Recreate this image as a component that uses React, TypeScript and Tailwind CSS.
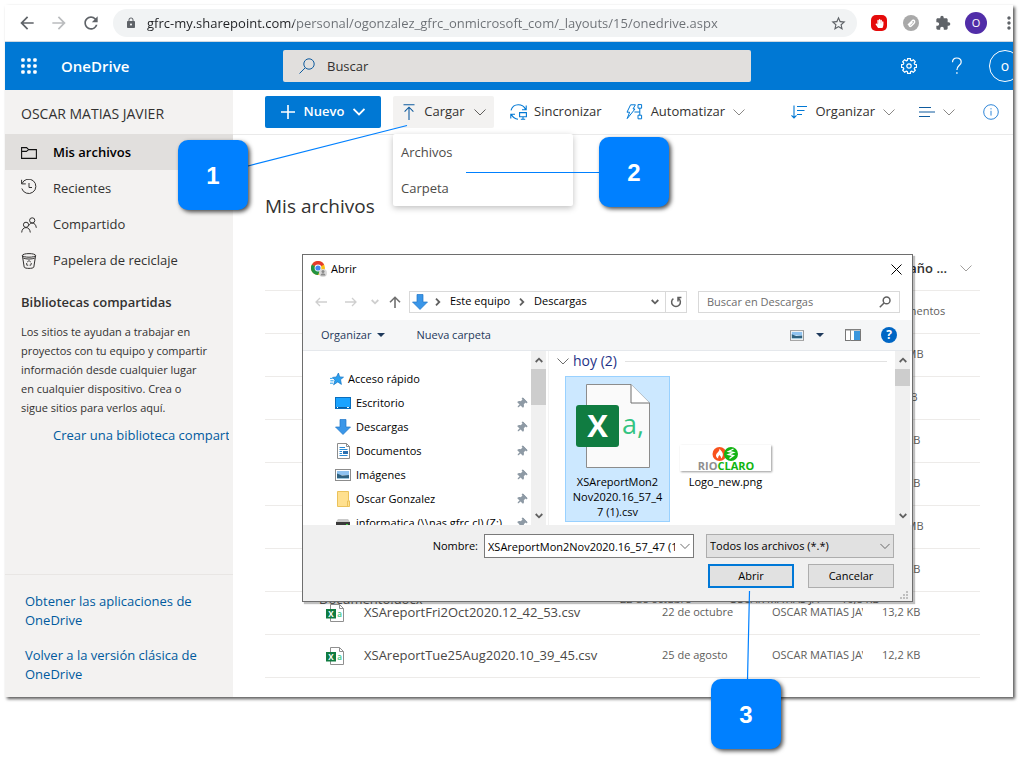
import React from "react";
import {
  MdArrowBack,
  MdArrowForward,
  MdExtension,
  MdLock,
  MdMoreVert,
  MdRefresh,
  MdStarBorder,
} from "react-icons/md";
import { FaHandPaper, FaThumbtack } from "react-icons/fa";

type IconProps = { className?: string };

const Chevron: React.FC<IconProps> = ({ className = "w-3 h-3" }) => (
  <svg viewBox="0 0 12 12" className={`shrink-0 ${className}`} fill="none" stroke="currentColor">
    <path d="M0.5 3.5 L6 9 L11.5 3.5" />
  </svg>
);

// Thick little arrow used by the Windows scroll bars
const ScrollArrow: React.FC<IconProps> = ({ className = "" }) => (
  <svg viewBox="0 0 8 6" className={`w-2 h-1.5 ${className}`} fill="none" stroke="#606060" strokeWidth="1.8">
    <path d="M0.7 1 L4 4.3 L7.3 1" />
  </svg>
);

const gearPoints = Array.from({ length: 8 })
  .flatMap((_, i) =>
    [
      [-16, 5.9],
      [-11, 7.6],
      [11, 7.6],
      [16, 5.9],
    ].map(([offset, radius]) => {
      const angle = ((i * 45 + offset) * Math.PI) / 180;
      return `${8 + radius * Math.cos(angle)},${8 + radius * Math.sin(angle)}`;
    }),
  )
  .join(" ");

const GearIcon = () => (
  <svg viewBox="0 0 16 16" className="w-4 h-4" fill="none" stroke="white" strokeWidth="1.2" strokeLinejoin="round">
    <polygon points={gearPoints} />
    <circle cx="8" cy="8" r="2.2" />
  </svg>
);

const QuestionIcon = () => (
  <svg viewBox="0 0 12 18" className="w-3 h-[18px]" fill="none" stroke="white" strokeWidth="1.2">
    <path d="M1.5 5.2 C1.5 2.6 3.3 1 5.8 1 C8.4 1 10.2 2.5 10.2 4.9 C10.2 8.4 5.9 8.3 5.9 13" />
    <path d="M5.9 15.2 V16.8" strokeWidth="1.4" />
  </svg>
);

const WaffleIcon = () => (
  <svg viewBox="0 0 16 16" className="w-4 h-4" fill="white">
    {[0, 6, 12].map((y) => [0, 6, 12].map((x) => <rect key={`${x}-${y}`} x={x + 0.2} y={y + 0.2} width="3.5" height="3.5" rx="1" />))}
  </svg>
);

const SearchIcon: React.FC<IconProps> = ({ className = "" }) => (
  <svg viewBox="0 0 16 16" className={`w-4 h-4 ${className}`} fill="none" stroke="currentColor">
    <circle cx="10" cy="6" r="5.2" />
    <path d="M6.2 9.8 L0.5 15.5" />
  </svg>
);

const FolderIcon = () => (
  <svg viewBox="0 0 16 16" className="w-4 h-4" fill="none" stroke="#111" strokeWidth="1.1">
    <path d="M0.6 13.4 V2.6 H5.6 L7.6 4.6 H15.4 V13.4 Z M0.6 6.4 H5.4 L7.6 4.6" />
  </svg>
);

const RecentIcon = () => (
  <svg viewBox="0 0 16 16" className="w-4 h-4 -mt-1" fill="none" stroke="#323130">
    <path d="M1 4.6 A7.2 7.2 0 1 1 0.8 9.5 M0.6 0.8 V4.9 H4.8 M8 4 V8.5 H11" />
  </svg>
);

const PeopleIcon = () => (
  <svg viewBox="0 0 16 16" className="w-4 h-4" fill="none" stroke="#323130">
    <circle cx="5" cy="7.8" r="2.6" />
    <circle cx="11.2" cy="3.4" r="2.6" />
    <path d="M0.7 15.5 C0.9 12.2 2.7 10.6 5 10.6 C7.3 10.6 8.9 12.2 9.3 15.5 M7.8 8.6 C8.6 6.9 9.8 6.1 11.2 6.1 C13.5 6.1 15 7.8 15.3 10.8" />
  </svg>
);

const BinIcon = () => (
  <svg viewBox="0 0 16 16" className="w-4 h-4" fill="none" stroke="#323130">
    <ellipse cx="8" cy="2.4" rx="6.6" ry="1.8" />
    <path d="M1.4 2.6 L3.2 14.2 C4 15.8 12 15.8 12.8 14.2 L14.6 2.6 M2.2 5 C5 6.4 11 6.4 13.8 5" />
    <path d="M6.2 9 L8 7.6 L9.8 9 M10.4 10 L9.8 12.2 H8.6 M7.2 12.2 H5.8 L5.6 10" strokeWidth="0.9" />
  </svg>
);

const UploadIcon = () => (
  <svg viewBox="0 0 12 16" className="w-3 h-4" fill="none" stroke="#0f5b9e" strokeWidth="1.1">
    <path d="M0.5 0.7 H11.5 M6 16 V3.4 M1.6 7.6 L6 3.2 L10.4 7.6" />
  </svg>
);

const SyncIcon = () => (
  <svg viewBox="0 0 18 16" className="w-[18px] h-4" fill="none" stroke="#0078d4" strokeWidth="1.1">
    <path d="M1 6.4 C2 2.8 5 0.8 8.2 0.8 C11.6 0.8 14.3 2.6 15.6 5.4 M16.2 1.4 V5.8 H12" />
    <path d="M0.8 14.6 V10.2 H5 M1.4 10.6 C2.8 13.4 5 15 8 15.2" />
    <path d="M9.6 8.6 H16.4 V12.8 H9.6 Z M13 12.8 V15 M10.8 15.2 H15.2" />
  </svg>
);

const AutomateIcon = () => (
  <svg viewBox="0 0 17 16" className="w-[17px] h-4" fill="none" stroke="#0078d4">
    <path d="M4.6 0.8 H9.4 L7 5 H9 L1.2 14.6 L3.6 8.2 H1 Z" />
    <path d="M12 0.6 H15.6 V4.2 H12 Z M12 11.2 H15.6 V14.8 H12 Z M13.8 4.2 V11.2 M8.4 8 H13.8" />
  </svg>
);

const SortIcon = () => (
  <svg viewBox="0 0 16 14" className="w-4 h-3.5" fill="none" stroke="#0078d4" strokeWidth="1.1">
    <path d="M3 0.5 V13 M0.5 10.4 L3 13 L5.5 10.4 M6 1.5 H16 M6 5.5 H13.5 M6 9.5 H11" />
  </svg>
);

const CsvIcon = () => (
  <svg viewBox="0 0 18 18" className="w-[18px] h-[18px]" aria-hidden="true">
    <path d="M4.5 0.5 H13.5 L17.5 4.5 V17.5 H4.5 Z M13.5 0.5 V4.5 H17.5" fill="white" stroke="#8f8f8f" />
    <rect x="0" y="5" width="10" height="9.5" fill="#107c41" />
    <text x="5" y="12.7" fontSize="8" fontWeight="700" fill="white" textAnchor="middle">X</text>
    <text x="13.6" y="12.8" fontSize="8" fontWeight="600" fill="#33c481" textAnchor="middle">a</text>
  </svg>
);

const DownArrowIcon: React.FC<IconProps> = ({ className = "" }) => (
  <svg viewBox="0 0 16 16" className={`w-4 h-4 ${className}`}>
    <path d="M5 0.5 H11 V8 H15.5 L8 15.5 L0.5 8 H5 Z" fill="#3a96e8" stroke="#1f75c7" strokeWidth="0.7" />
  </svg>
);

const StarIcon = () => (
  <svg viewBox="0 0 14 14" className="w-3.5 h-3.5">
    <path d="M8.4 1 L9.7 4.9 L13.5 5.2 L10.5 7.6 L11.4 12.4 L7.8 9.9 L3.6 12.8 L5 8.2 L2.6 5.4 L6.4 5 Z" fill="#2ba0ee" stroke="#1173c4" strokeWidth="0.7" />
    <path d="M0 6.4 H2.8 M0.4 8.8 H3.6 M0 11.2 H3" stroke="#2ba0ee" />
  </svg>
);

const DesktopIcon = () => (
  <svg viewBox="0 0 16 12" className="w-4 h-3">
    <rect x="0.5" y="0.5" width="15" height="11" fill="#1aa3ff" stroke="#0a6ebd" />
    <path d="M1 10.5 H15" stroke="#0a5c9f" />
    <path d="M2 10.5 H3 M12 10.5 H14" stroke="white" />
  </svg>
);

const DocumentIcon = () => (
  <svg viewBox="0 0 13 16" className="w-[13px] h-4">
    <path d="M0.5 0.5 H9.5 L12.5 3.5 V15.5 H0.5 Z M9.5 0.5 V3.5 H12.5" fill="white" stroke="#8c8c8c" />
    <path d="M2.5 4.5 H8 M2.5 6.5 H10.5 M2.5 8.5 H5 M2.5 10.5 H5 M2.5 12.5 H10.5" stroke="#2a8ad4" />
    <rect x="6" y="8" width="5" height="3" fill="#2a6fb0" />
  </svg>
);

const PictureIcon: React.FC<IconProps> = ({ className = "w-4 h-3" }) => (
  <svg viewBox="0 0 16 12" className={className}>
    <rect x="0.5" y="0.5" width="15" height="11" fill="white" stroke="#8c8c8c" />
    <rect x="2" y="2" width="12" height="4" fill="#8fc3f0" />
    <path d="M2 4.5 L7 6.5 L14 6 V9 H2 Z" fill="#2f6280" />
    <path d="M2 9.5 H14" stroke="#9cc6dc" />
  </svg>
);

const YellowFolderIcon = () => (
  <svg viewBox="0 0 13 16" className="w-[13px] h-4">
    <path d="M0.5 0.5 H11.5 V9.5 L12.5 10 V15.5 H0.5 Z" fill="#ffe08f" stroke="#ebc25b" />
    <path d="M10.5 15 V10 H12.5" fill="none" stroke="#ebc25b" />
  </svg>
);

const DriveIcon = () => (
  <svg viewBox="0 0 14 10" className="w-3.5 h-2.5">
    <path d="M2 1 H12 L14 4 H0 Z" fill="#c9c9c9" />
    <rect y="4" width="14" height="5" fill="#3a3a3a" />
    <rect x="10" y="6" width="2" height="1.4" fill="#3bd23b" />
  </svg>
);

const ChromeIcon = () => (
  <svg viewBox="0 0 16 16" className="w-4 h-4">
    <circle cx="7" cy="7" r="7" fill="#fbc116" />
    <path d="M7 7 L0.9 3.5 A7 7 0 0 1 13.1 3.5 Z" fill="#e33b2e" />
    <path d="M7 7 L0.9 3.5 A7 7 0 0 0 7 14 L9 9 Z" fill="#229342" />
    <circle cx="7" cy="7" r="3.4" fill="white" />
    <circle cx="7" cy="7" r="2.6" fill="#4285f4" />
    <circle cx="12" cy="12" r="4" fill="#dadada" />
    <circle cx="12" cy="10.6" r="1.5" fill="#8b8b8b" />
    <path d="M9.6 14.6 C9.6 11.6 14.4 11.6 14.4 14.6 Z" fill="#8b8b8b" />
  </svg>
);

const LargeCsvIcon = () => (
  <svg viewBox="0 0 74 84" className="w-[74px] h-[84px] mr-2.5" aria-hidden="true">
    <path d="M10.5 0.5 H55 L73.5 19 V83.5 H10.5 Z" fill="#fafafa" stroke="#8c8c8c" />
    <path d="M55 0.5 V19 H73.5" fill="white" stroke="#6f6f6f" />
    <rect x="0" y="21" width="43" height="42" rx="3" fill="#107c41" />
    <text x="21.5" y="53" fontSize="31" fontWeight="700" fill="white" textAnchor="middle">X</text>
    <text x="57" y="50" fontSize="27" fill="#33c481" textAnchor="middle">a,</text>
  </svg>
);

const RioClaroLogo = () => (
  <svg viewBox="0 0 91 26" className="w-[91px] h-[26px] bg-white shadow-[1px_1px_2px_#9a9a9a]" aria-hidden="true">
    <circle cx="39.5" cy="9" r="7" fill="#f8521d" />
    <circle cx="51" cy="9" r="7" fill="#12b312" />
    <path d="M39.5 3.5 C41 6 43.5 7.5 42.8 10.6 C42.3 13 41 13.6 41 13.6 C41.4 11.8 40.2 10.8 39.5 10 C38.8 11 37.8 12 38.2 13.6 C35.4 12 35.6 9.6 37 8.2 C38.6 6.6 39.6 5.6 39.5 3.5 Z" fill="white" />
    <path d="M53.5 4 L48.5 6.5 L53.5 7.5 L48.5 9.5 L53.5 10.5 L49.5 13.5" fill="none" stroke="white" strokeWidth="1.3" />
    <text x="46" y="25" fontSize="11" fontWeight="700" textAnchor="middle" fill="#8f8f8f">
      RIO<tspan fill="#0fb50f">CLARO</tspan>
    </text>
  </svg>
);

const BrowserBar = () => (
  <div className="flex items-center h-[37px] pl-3 bg-white border-b border-[#cfd8e0] text-[#5f6368] overflow-hidden">
    <button aria-label="Atrás"><MdArrowBack size={20} /></button>
    <button aria-label="Adelante" className="ml-3 text-[#babcbe]"><MdArrowForward size={20} /></button>
    <button aria-label="Recargar" className="ml-3"><MdRefresh size={20} /></button>
    <div className="flex flex-1 items-center min-w-0 h-7 ml-3 pl-3 pr-2.5 rounded-full bg-[#f1f3f4]">
      <MdLock size={12} className="shrink-0" />
      <input
        aria-label="Dirección"
        className="flex-1 min-w-0 ml-2.5 pt-px text-[13px] outline-none bg-[linear-gradient(90deg,#202124_147px,#6b6f74_147px)] bg-clip-text text-transparent"
        defaultValue="gfrc-my.sharepoint.com/personal/ogonzalez_gfrc_onmicrosoft_com/_layouts/15/onedrive.aspx"
      />
      <button aria-label="Favoritos"><MdStarBorder size={17} /></button>
    </div>
    <div className="flex items-center shrink-0 ml-3.5">
      <span className="flex items-center justify-center w-4 h-4 rounded-[5px] bg-[#e50b0b] text-white"><FaHandPaper size={9} /></span>
      <span className="flex items-center justify-center w-4 h-4 ml-4 rounded-full bg-[#a9a9a9]">
        <svg viewBox="0 0 10 10" className="w-2.5 h-2.5" fill="none" stroke="white" strokeWidth="1.5">
          <path d="M2 7 L6.5 2.5 C8.5 1.5 9.3 4 8 5.2 L5 8.2 C3.8 9 2.8 7.6 3.6 6.6 L6.4 4" />
        </svg>
      </span>
      <MdExtension size={16} className="ml-4" />
      <span className="flex items-center justify-center w-[22px] h-[22px] ml-3.5 rounded-full bg-[#512da8] text-white text-[11px]">O</span>
      <button aria-label="Menú" className="ml-3 -mr-1.5"><MdMoreVert size={20} /></button>
    </div>
  </div>
);

const SuiteBar = () => (
  <header className="flex items-center h-12 pl-4 bg-[#0078d4] text-white overflow-hidden">
    <button aria-label="Aplicaciones"><WaffleIcon /></button>
    <a href="#" className="w-[222px] ml-6 text-[15px] font-semibold">OneDrive</a>
    <label className="flex items-center w-[468px] h-8 pl-4 rounded-xs bg-[#e1dfdd] text-[#0f5b9e]">
      <SearchIcon />
      <input aria-label="Buscar" placeholder="Buscar" className="flex-1 ml-3 pt-0.5 text-[13px] text-[#323130] placeholder:text-[#323130] outline-none" />
    </label>
    <div className="flex items-center ml-auto shrink-0 -mr-2">
      <button aria-label="Configuración"><GearIcon /></button>
      <button aria-label="Ayuda" className="ml-[34px]"><QuestionIcon /></button>
      <button className="w-8 h-8 ml-[26px] rounded-full border border-white text-sm">o</button>
    </div>
  </header>
);

const navItems = [
  { label: "Mis archivos", icon: FolderIcon, active: true },
  { label: "Recientes", icon: RecentIcon },
  { label: "Compartido", icon: PeopleIcon },
  { label: "Papelera de reciclaje", icon: BinIcon },
];

const Sidebar = () => (
  <aside className="flex flex-col w-[228px] shrink-0 bg-[#f3f2f1] text-[#323130] text-[13px] overflow-hidden">
    <div className="flex items-center h-11 pl-4 pt-1 text-sm">OSCAR MATIAS JAVIER</div>
    <nav>
      {navItems.map(({ label, icon: Icon, active }) => (
        <a
          key={label}
          href="#"
          className={`flex items-center gap-4 h-9 pl-4 pt-0.5 ${active ? "bg-[#e1dfdd] text-black font-semibold" : ""}`}
        >
          <Icon />
          <span>{label}</span>
        </a>
      ))}
    </nav>
    <h2 className="mt-3.5 pl-4 leading-5 font-semibold">Bibliotecas compartidas</h2>
    <p className="mt-2.5 pl-4 text-[11px] leading-[19px] whitespace-nowrap">
      Los sitios te ayudan a trabajar en<br />
      proyectos con tu equipo y compartir<br />
      información desde cualquier lugar<br />
      en cualquier dispositivo. Crea o<br />
      sigue sitios para verlos aquí.
    </p>
    <a href="#" className="w-[176px] mt-2 ml-12 leading-5 whitespace-nowrap overflow-hidden text-[#005a9e]">Crear una biblioteca compartida</a>
    <div className="flex flex-col gap-4 mt-auto pt-[17px] pb-[13px] px-5 border-t border-[#e8e6e4] leading-[19px] text-[#005a9e]">
      <a href="#">Obtener las aplicaciones de<br />OneDrive</a>
      <a href="#">Volver a la versión clásica de<br />OneDrive</a>
    </div>
  </aside>
);

const CommandBar = () => (
  <div className="flex items-center h-[45px] pl-8 pr-3.5 border-b border-[#eaeaea] text-[13px] text-[#323130]">
    <button className="flex items-center justify-between w-[116px] h-8 px-4 rounded-xs bg-[#0078d4] text-white font-semibold">
      <svg viewBox="0 0 14 14" className="w-3.5 h-3.5" stroke="white" strokeWidth="1.6"><path d="M7 0 V14 M0 7 H14" /></svg>
      Nuevo
      <svg viewBox="0 0 12 8" className="w-3 h-2" fill="none" stroke="white" strokeWidth="1.8"><path d="M0.5 1 L6 6.5 L11.5 1" /></svg>
    </button>
    <div className="relative ml-3">
      <button className="flex items-center justify-between w-[101px] h-8 pl-2.5 pr-2 rounded-xs bg-[#f3f2f1]">
        <UploadIcon />
        Cargar
        <Chevron className="w-3 h-3 text-[#605e5c]" />
      </button>
      <div className="absolute left-0 top-[38px] flex flex-col w-[180px] rounded-xs bg-white shadow-[0_2px_6px_rgba(0,0,0,0.25)] text-[#4d4b49]">
        <button className="h-9 px-2 pt-0.5 text-left">Archivos</button>
        <button className="h-9 px-2 pt-0.5 text-left">Carpeta</button>
      </div>
    </div>
    <button className="flex items-center gap-1.5 ml-4"><SyncIcon />Sincronizar</button>
    <button className="flex items-center gap-2 ml-6"><AutomateIcon />Automatizar<Chevron className="w-3 h-3 text-[#8a8886]" /></button>
    <button className="flex items-center gap-2 ml-auto"><SortIcon />Organizar<Chevron className="w-3 h-3 text-[#8a8886]" /></button>
    <button aria-label="Vista" className="flex items-center gap-2 ml-6">
      <svg viewBox="0 0 16 10" className="w-4 h-2.5" stroke="#0f5b9e"><path d="M0 0.5 H12 M0 5 H16 M0 9.5 H11" /></svg>
      <Chevron className="w-3 h-3 text-[#8a8886]" />
    </button>
    <button aria-label="Información" className="ml-7">
      <svg viewBox="0 0 16 16" className="w-4 h-4" fill="none" stroke="#2f86d8">
        <circle cx="8" cy="8" r="7.3" />
        <path d="M8 6.8 V11.6 M8 4.2 V5.4" />
      </svg>
    </button>
  </div>
);

const files = [
  { name: "", date: "", owner: "", size: "4 elementos" },
  { name: "", date: "", owner: "", size: "1,43 MB" },
  { name: "", date: "", owner: "", size: "134 KB" },
  { name: "", date: "", owner: "", size: "15,4 KB" },
  { name: "", date: "", owner: "", size: "18,2 KB" },
  { name: "", date: "", owner: "", size: "2,35 MB" },
  { name: "", date: "", owner: "", size: "10,8 KB" },
  { name: "XSAreportFri2Oct2020.12_42_53.csv", date: "22 de octubre", owner: "OSCAR MATIAS JAVIER", size: "13,2 KB" },
  { name: "XSAreportTue25Aug2020.10_39_45.csv", date: "25 de agosto", owner: "OSCAR MATIAS JAVIER", size: "12,2 KB" },
];

const FileTable = () => (
  <table className="table-fixed w-full text-[11px] text-[#605e5c] whitespace-nowrap">
    <thead>
      <tr className="h-[43px] border-b border-[#edebe9] text-left text-[13px] text-[#323130]">
        <th className="w-[99px]" />
        <th />
        <th className="w-[110px]" />
        <th className="w-[110px]" />
        <th className="w-[98px] font-semibold">
          <span className="flex items-center justify-between pr-2">Tamaño ...<Chevron className="w-3 h-3 text-[#a19f9d]" /></span>
        </th>
      </tr>
    </thead>
    <tbody>
      {files.map((file, i) => (
        <tr key={i} className="h-[43px] border-b border-[#edebe9]">
          <td className="pl-[61px]">{file.name && <CsvIcon />}</td>
          <td className="text-[13px] text-[#4a4846]">{file.name}</td>
          <td>{file.date}</td>
          <td><span className="block w-[91px] overflow-hidden">{file.owner}</span></td>
          <td>{file.size}</td>
        </tr>
      ))}
    </tbody>
  </table>
);

const quickAccess = [
  { label: "Escritorio", icon: DesktopIcon },
  { label: "Descargas", icon: DownArrowIcon },
  { label: "Documentos", icon: DocumentIcon },
  { label: "Imágenes", icon: PictureIcon },
  { label: "Oscar Gonzalez", icon: YellowFolderIcon },
  { label: "informatica (\\\\nas.gfrc.cl) (Z:)", icon: DriveIcon },
];

const ScrollBar: React.FC<{ thumb: string }> = ({ thumb }) => (
  <div className="flex flex-col items-center w-[15px] shrink-0 py-1.5 bg-[#f0f0f0]">
    <ScrollArrow className="rotate-180" />
    <div className={`w-full mt-1.5 bg-[#cdcdcd] ${thumb}`} />
    <ScrollArrow className="mt-auto" />
  </div>
);

const OpenDialog = () => (
  <div
    role="dialog"
    aria-label="Abrir"
    className="absolute left-[297px] top-[249px] flex flex-col w-[611px] h-[348px] border border-[#6e6e6e] bg-white text-[11px] text-black shadow-[2px_2px_1px_rgba(0,0,0,0.25)]"
  >
    <div className="flex items-center h-7 pl-2 pr-2.5">
      <ChromeIcon />
      <span className="ml-1 pt-px">Abrir</span>
      <button aria-label="Cerrar" className="ml-auto">
        <svg viewBox="0 0 11 11" className="w-[11px] h-[11px]" stroke="black"><path d="M0.5 0.5 L10.5 10.5 M10.5 0.5 L0.5 10.5" /></svg>
      </button>
    </div>

    <div className="flex items-center h-[37px] px-3 text-[#8a8a8a]">
      <svg viewBox="0 0 12 10" className="w-3 h-2.5" fill="none" stroke="#cfcfcf" strokeWidth="1.3"><path d="M12 5 H1 M5 1 L1 5 L5 9" /></svg>
      <svg viewBox="0 0 12 10" className="w-3 h-2.5 ml-[18px]" fill="none" stroke="#cfcfcf" strokeWidth="1.3"><path d="M0 5 H11 M7 1 L11 5 L7 9" /></svg>
      <ScrollArrow className="ml-3.5 opacity-30" />
      <svg viewBox="0 0 12 12" className="w-3 h-3 ml-2.5" fill="none" stroke="#707070" strokeWidth="1.6"><path d="M6 12 V1.5 M1 6.3 L6 1.3 L11 6.3" /></svg>
      <div className="flex items-center w-[278px] h-[22px] ml-2 border border-[#d9d9d9] text-black">
        <DownArrowIcon className="ml-0.5" />
        <ScrollArrow className="-rotate-90 ml-1.5" />
        <span className="ml-2">Este equipo</span>
        <ScrollArrow className="-rotate-90 ml-2" />
        <span className="ml-2">Descargas</span>
        <button aria-label="Ubicaciones anteriores" className="ml-auto mr-1.5"><ScrollArrow /></button>
        <button aria-label="Actualizar" className="flex items-center justify-center w-[21px] h-full border-l border-[#d9d9d9]">
          <svg viewBox="0 0 12 12" className="w-3 h-3" fill="none" stroke="#606060" strokeWidth="1.5"><path d="M3.4 2.6 A4.4 4.4 0 1 0 8.6 2.6 M8 5.4 V1.6 H11.4" /></svg>
        </button>
      </div>
      <label className="flex items-center w-[202px] h-[22px] ml-[11px] px-2 border border-[#d9d9d9]">
        <input aria-label="Buscar en Descargas" placeholder="Buscar en Descargas" className="flex-1 min-w-0 pt-px outline-none placeholder:text-[#6d6d6d]" />
        <svg viewBox="0 0 12 12" className="w-3 h-3" fill="none" stroke="#606060" strokeWidth="1.5"><circle cx="7.6" cy="4.4" r="3.4" /><path d="M5 7 L0.8 11.2" /></svg>
      </label>
    </div>

    <div className="flex items-center h-[31px] pl-[18px] pr-[15px] border-b border-[#e5e8ec] bg-[#f5f6f7] text-[#1e395b]">
      <button className="flex items-center gap-1.5">
        Organizar
        <svg viewBox="0 0 8 4" className="w-2 h-1" fill="currentColor"><path d="M0 0 H8 L4 4 Z" /></svg>
      </button>
      <button className="ml-[31px]">Nueva carpeta</button>
      <button aria-label="Cambiar vista" className="flex items-center gap-3 ml-auto">
        <PictureIcon className="w-3.5 h-[11px]" />
        <svg viewBox="0 0 8 4" className="w-2 h-1" fill="currentColor"><path d="M0 0 H8 L4 4 Z" /></svg>
      </button>
      <button aria-label="Panel de vista previa" className="ml-[21px]">
        <svg viewBox="0 0 16 12" className="w-4 h-3">
          <rect x="0.5" y="0.5" width="15" height="11" fill="white" stroke="#777" />
          <path d="M0 1 H16 M5.5 1 V12" stroke="#8a8a8a" />
          <rect x="9" y="2" width="6" height="9" fill="#3a96dd" />
        </svg>
      </button>
      <button aria-label="Ayuda" className="w-4 h-4 ml-5 rounded-full bg-[#0066c4] text-white text-xs leading-4 font-bold">?</button>
    </div>

    <div className="flex h-[174px]">
      <div className="flex-1 pt-4 overflow-hidden">
        <div className="flex items-center gap-1 h-6 pl-[27px]"><StarIcon />Acceso rápido</div>
        {quickAccess.map(({ label, icon: Icon }) => (
          <div key={label} className="flex items-center h-6 pl-8 pr-1 whitespace-nowrap">
            <span className="flex justify-center w-4 mr-[5px]"><Icon /></span>
            {label}
            <FaThumbtack size={11} className="ml-auto rotate-45 text-[#8e9aa5]" />
          </div>
        ))}
      </div>
      <ScrollBar thumb="h-9" />
      <div className="w-[347px] ml-0.5 pl-2 border-l border-[#f2f2f2]">
        <div className="flex items-center h-5 text-sm text-[#1e3287]">
          <Chevron className="w-3 h-3 text-[#6d6d6d]" />
          <span className="ml-1">hoy (2)</span>
          <span className="flex-1 h-px ml-2 mr-2 bg-[#e2e2e2]" />
        </div>
        <div className="flex gap-2.5 pl-2 mt-[5px] text-center leading-[15px]">
          <button className="flex flex-col items-center w-[105px] h-[146px] pt-[7px] border border-[#99d1ff] bg-[#cce8ff]">
            <LargeCsvIcon />
            <span className="mt-1.5">XSAreportMon2<br />Nov2020.16_57_4<br />7 (1).csv</span>
          </button>
          <button className="flex flex-col items-center w-[91px] h-[120px] justify-end pb-[7px]">
            <RioClaroLogo />
            <span className="mt-[3px]">Logo_new.png</span>
          </button>
        </div>
      </div>
      <ScrollBar thumb="h-[17px]" />
      <div className="w-0.5" />
    </div>

    <div className="flex flex-col flex-1 items-end gap-1.5 pt-[9px] pr-[18px] bg-[#f0f0f0]">
      <div className="flex items-center">
        <label htmlFor="file-name">Nombre:</label>
        <div className="relative w-[210px] ml-1.5">
          <input id="file-name" defaultValue="XSAreportMon2Nov2020.16_57_47 (1).csv" className="block w-full h-6 pl-[3px] pr-[18px] border border-[#7a7a7a] bg-white outline-none" />
          <Chevron className="absolute right-1 top-[7px] w-2.5 h-2.5 text-[#505050]" />
        </div>
        <div className="relative w-[188px] ml-3">
          <select aria-label="Tipo de archivo" className="block w-full h-6 pl-[3px] appearance-none border border-[#adadad] bg-[#e1e1e1] outline-none">
            <option>Todos los archivos (*.*)</option>
          </select>
          <Chevron className="absolute right-1 top-[7px] w-2.5 h-2.5 text-[#505050]" />
        </div>
      </div>
      <div className="flex gap-3.5">
        <button className="w-[86px] h-6 border-2 border-[#0078d7] bg-[#e1e1e1]">Abrir</button>
        <button className="w-[86px] h-6 border border-[#adadad] bg-[#e1e1e1]">Cancelar</button>
      </div>
    </div>
    <svg viewBox="0 0 8 8" className="absolute right-1 bottom-0.5 w-2 h-2" fill="#bfbfbf">
      <path d="M6 0 H8 V2 H6 Z M3 3 H5 V5 H3 Z M6 3 H8 V5 H6 Z M0 6 H2 V8 H0 Z M3 6 H5 V8 H3 Z M6 6 H8 V8 H6 Z" />
    </svg>
  </div>
);

// Row left half scrolled under the dialog's lower edge
const CoveredRow = () => (
  <div className="absolute left-[314px] top-[585px] flex h-[15px] overflow-hidden text-[11px] leading-[18px] text-[#605e5c] whitespace-nowrap">
    <span className="w-[301px] text-[13px]">Documento.docx</span>
    <span className="w-[109px]">22 de octubre</span>
    <span className="w-28">OSCAR MATIAS JA</span>
    <span>10,8 KB</span>
  </div>
);

const Callout: React.FC<{ step: number; place: string }> = ({ step, place }) => (
  <div
    className={`absolute flex items-center justify-center w-[70px] h-[70px] pt-0.5 rounded-[10px] bg-[#0080ff] text-white text-2xl font-bold font-['Liberation_Sans',sans-serif] shadow-[2px_2px_4px_rgba(0,0,0,0.7)] ${place}`}
  >
    {step}
  </div>
);

export default function App() {
  return (
    <div className="relative pl-[5px] pr-[9px] pt-[5px] pb-18 bg-white font-['Open_Sans',sans-serif]">
      <div className="relative shadow-[2px_2px_3px_rgba(0,0,0,0.65)]">
        <BrowserBar />
        <SuiteBar />
        <div className="flex bg-white">
          <Sidebar />
          <main className="flex-1 min-w-0">
            <CommandBar />
            <div className="pl-8 pr-[33px] pb-[19px]">
              <h1 className="pt-14 pb-[26px] text-[19px] leading-[30px] text-[#323130]">Mis archivos</h1>
              <FileTable />
            </div>
          </main>
        </div>
        <CoveredRow />
        <OpenDialog />
      </div>

      {/* Numbered steps and the lines that tie them to their controls */}
      <svg className="absolute left-0 top-0 w-full h-full pointer-events-none" stroke="#0080ff" strokeWidth="1.2">
        <path d="M248 166 L407 125.5 M466 172.5 H600 M749.5 591 L747.5 680" />
      </svg>
      <Callout step={1} place="left-[178px] top-[140px]" />
      <Callout step={2} place="left-[599px] top-[137px]" />
      <Callout step={3} place="left-[711px] top-[679px]" />
    </div>
  );
}
